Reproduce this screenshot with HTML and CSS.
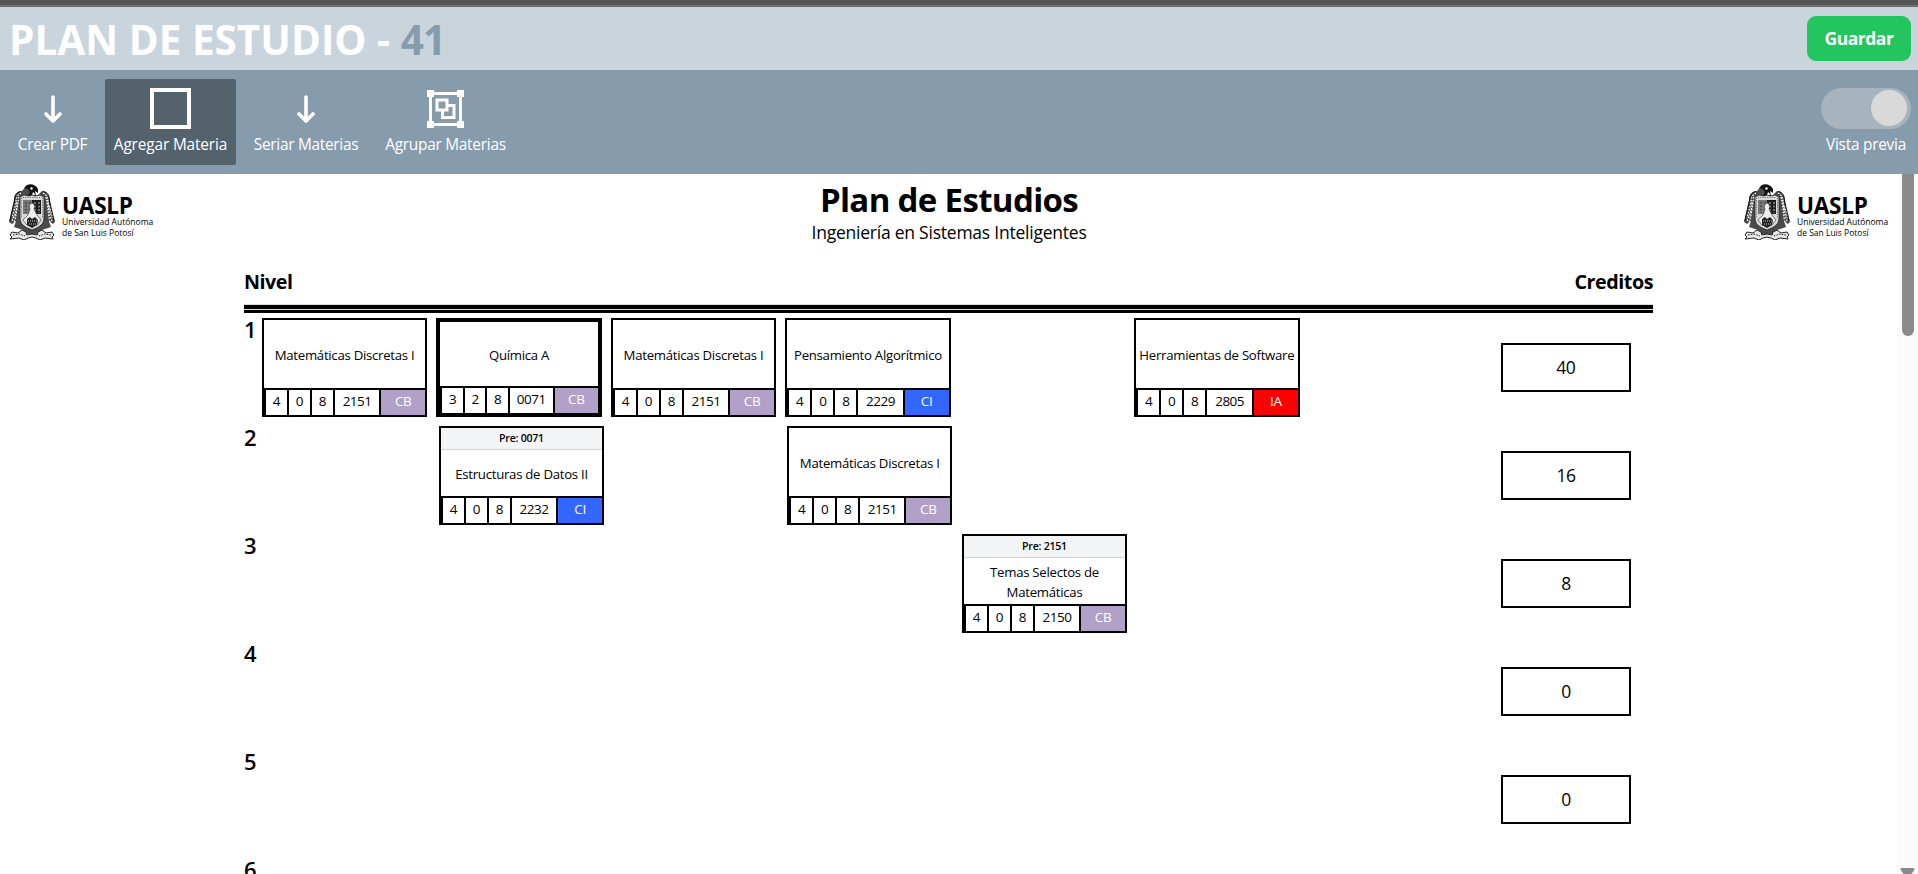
FILE: index.html
```html
<!DOCTYPE html>
<html lang="es">
<head>
<meta charset="utf-8">
<title>Plan de Estudio</title>
<link rel="stylesheet" href="styles.css">
</head>
<body>
<svg class="defs" width="0" height="0" aria-hidden="true">
  <symbol id="crest" viewBox="0 0 46 56">
    <path fill="#4a4a4a" d="M13 7C8 7 5 11 5 16L3 25 0 38l3 2 4-3-2 6 9 3 3 4h13l3-4 9-3-2-6 4 3 2-2-4-13-1-9C40 11 37 7 33 7l-5 5-3-1-2-9-5-1z"/>
    <path fill="#111" d="M15 4l3-3c4-2 9 0 11 4v4l-3-2 1 5h-8l2-4-2-3z"/>
    <path fill="#fff" d="M21 4l2-1 1 2-2 1zM24 8l2 2-1 2-2-1z"/>
    <path fill="none" stroke="#fff" stroke-width="1.3" stroke-dasharray="1.6 1.4" d="M12 9c-4 2-5 5-5 10L3 34M34 9c4 2 5 5 5 10l5 15M10 13c-2 8-2 16-5 26M37 13c2 8 2 16 4 26M8 18c0 8-2 13-5 19M39 18c1 8 2 13 4 19"/>
    <path fill="none" stroke="#111" stroke-width="1" d="M12 7.500C7 8 5.500 12 5.500 17L.8 37M34 7.500c5 .5 6.500 4.500 6.500 9.500l4.700 20"/>
    <path fill="#d8d8d8" stroke="#222" stroke-width=".8" d="M11 13l4-2 5 1 3-1 3 1 5-1 4 2v21c0 6-4 9-12 12-8-3-12-6-12-12z"/>
    <path fill="none" stroke="#666" stroke-width="1" stroke-dasharray="1 1.3" d="M12.500 14v20M33.500 14v20M14 13.500h18"/>
    <path fill="#777" d="M14 16h9v14h-9z"/>
    <path fill="#1c1c1c" d="M23 16h9v14h-9z"/>
    <path stroke="#ccc" stroke-width="1" stroke-dasharray="2 1.5" d="M26 18v11M30 18v11"/>
    <path stroke="#333" stroke-width="1.2" stroke-dasharray="1.5 2" d="M17 18v11M21 18v11"/>
    <path fill="#eee" stroke="#444" stroke-width=".7" d="M23 19c3 1 3 4 2 6l3 6 4 5-4 5H18l-4-5 5-5 2-6c-1-2-1-5 2-6z"/>
    <path fill="#222" d="M18 35l3-2 2 2 3-2 3 3-1 5-5 3-5-3z"/>
    <path stroke="#fff" stroke-width=".8" stroke-dasharray="1 1" d="M19 37h9M20 40h7"/>
    <path fill="#e8e8e8" stroke="#222" stroke-width="1" stroke-linejoin="round" d="M1 51l2-3 6 1 4-3 4 2 1 3 5-1 5 1 1-3 4-2 4 3 6-1 2 3-2 2 1 2-8-1-5 2-4-2-4-1-4 1-4 2-5-2-9 1 2-2z"/>
    <path fill="none" stroke="#222" stroke-width="1" stroke-dasharray="1.6 1.2" d="M4 51l7-1 4 2 3-2M42 51l-7-1-4 2-3-2"/>
  </symbol>
  <symbol id="arrow" viewBox="0 0 18 28">
    <path fill="none" stroke="#fff" stroke-width="3.6" stroke-linecap="round" stroke-linejoin="round" d="M9 2v23M2 19l7 7 7-7"/>
  </symbol>
</svg>

<div class="app">
  <div class="strip"></div>
  <header class="header">
    <h1 class="title">PLAN DE ESTUDIO - <span class="title-id">41</span></h1>
    <button class="save">Guardar</button>
  </header>

  <nav class="toolbar">
    <div class="tools">
      <div class="tool tool-pdf"><div class="tool-icon"><svg class="arrow"><use href="#arrow"/></svg></div><span>Crear PDF</span></div>
      <div class="tool tool-add tool-active"><div class="tool-icon"><div class="square"></div></div><span>Agregar Materia</span></div>
      <div class="tool tool-link"><div class="tool-icon"><svg class="arrow"><use href="#arrow"/></svg></div><span>Seriar Materias</span></div>
      <div class="tool tool-group"><div class="tool-icon">
        <svg width="37" height="38" viewBox="0 0 37 38">
          <path fill="none" stroke="#fff" stroke-width="3" d="M3.500 3.500h30v31h-30z"/>
          <path fill="#fff" d="M0 0h7v7H0zM30 0h7v7h-7zM0 31h7v7H0zM30 31h7v7h-7z"/>
          <path fill="none" stroke="#fff" stroke-width="3" d="M10 10h10v10H10z"/>
          <path fill="none" stroke="#fff" stroke-width="3" d="M20 15.500h7v12H15.500V20"/>
        </svg></div><span>Agrupar Materias</span></div>
    </div>
    <div class="preview">
      <div class="toggle"><div class="knob"></div></div>
      <span>Vista previa</span>
    </div>
  </nav>

  <main class="viewport">
    <div class="sheet">
      <div class="sheet-head">
        <div class="logo"><svg class="crest"><use href="#crest"/></svg><div class="logo-text"><b>UASLP</b><span>Universidad Autónoma</span><span>de San Luis Potosí</span></div></div>
        <div class="heading"><h2>Plan de Estudios</h2><p>Ingeniería en Sistemas Inteligentes</p></div>
        <div class="logo"><svg class="crest"><use href="#crest"/></svg><div class="logo-text"><b>UASLP</b><span>Universidad Autónoma</span><span>de San Luis Potosí</span></div></div>
      </div>

      <section class="plan">
        <div class="plan-head"><span>Nivel</span><span>Creditos</span></div>
        <div class="rule rule-top"></div>
        <div class="rule rule-bottom"></div>

        <div class="level level-first">
          <div class="num">1</div>
          <div class="slot"><div class="card"><div class="name">Matemáticas Discretas I</div><div class="cells"><i>4</i><i>0</i><i>8</i><i>2151</i><i class="cb">CB</i></div></div></div>
          <div class="slot"><div class="card card-thick"><div class="name">Química A</div><div class="cells"><i>3</i><i>2</i><i>8</i><i>0071</i><i class="cb">CB</i></div></div></div>
          <div class="slot"><div class="card"><div class="name">Matemáticas Discretas I</div><div class="cells"><i>4</i><i>0</i><i>8</i><i>2151</i><i class="cb">CB</i></div></div></div>
          <div class="slot"><div class="card"><div class="name">Pensamiento Algorítmico</div><div class="cells"><i>4</i><i>0</i><i>8</i><i>2229</i><i class="ci">CI</i></div></div></div>
          <div class="slot"></div>
          <div class="slot"><div class="card"><div class="name">Herramientas de Software</div><div class="cells cells-wide"><i>4</i><i>0</i><i>8</i><i>2805</i><i class="ia">IA</i></div></div></div>
          <div class="slot"></div>
          <div class="slot credit"><div class="box">40</div></div>
        </div>

        <div class="level">
          <div class="num">2</div>
          <div class="slot"></div>
          <div class="slot"><div class="card"><div class="pre">Pre: 0071</div><div class="name">Estructuras de Datos II</div><div class="cells"><i>4</i><i>0</i><i>8</i><i>2232</i><i class="ci">CI</i></div></div></div>
          <div class="slot"></div>
          <div class="slot"><div class="card"><div class="name">Matemáticas Discretas I</div><div class="cells"><i>4</i><i>0</i><i>8</i><i>2151</i><i class="cb">CB</i></div></div></div>
          <div class="slot"></div><div class="slot"></div><div class="slot"></div>
          <div class="slot credit"><div class="box">16</div></div>
        </div>

        <div class="level level-third">
          <div class="num">3</div>
          <div class="slot"></div><div class="slot"></div><div class="slot"></div><div class="slot"></div>
          <div class="slot"><div class="card"><div class="pre">Pre: 2151</div><div class="name">Temas Selectos de Matemáticas</div><div class="cells"><i>4</i><i>0</i><i>8</i><i>2150</i><i class="cb">CB</i></div></div></div>
          <div class="slot"></div><div class="slot"></div>
          <div class="slot credit"><div class="box">8</div></div>
        </div>

        <div class="level">
          <div class="num">4</div>
          <div class="slot"></div><div class="slot"></div><div class="slot"></div><div class="slot"></div><div class="slot"></div><div class="slot"></div><div class="slot"></div>
          <div class="slot credit"><div class="box">0</div></div>
        </div>

        <div class="level">
          <div class="num">5</div>
          <div class="slot"></div><div class="slot"></div><div class="slot"></div><div class="slot"></div><div class="slot"></div><div class="slot"></div><div class="slot"></div>
          <div class="slot credit"><div class="box">0</div></div>
        </div>

        <div class="level">
          <div class="num">6</div>
        </div>
      </section>
    </div>
    <div class="scrollbar">
      <div class="thumb"></div>
      <svg width="15" height="6" viewBox="0 0 15 6"><path fill="#8b8b8b" d="M2 0h11c1.500 0 2 1 1.300 2L11.500 6h-8L.7 2C0 1 .5 0 2 0z"/></svg>
    </div>
  </main>
</div>
</body>
</html>
```

FILE: styles.css
```css
* { box-sizing: border-box; margin: 0; padding: 0; }

body {
  font-family: "Open Sans", "Noto Sans", sans-serif;
  font-size: 18px;
  color: #000;
  background: #fff;
  overflow: hidden;
}

.defs { position: absolute; }

.app { display: flex; flex-direction: column; height: 874px; overflow: hidden; }

.strip { flex: none; height: 7px; background: #565656; border-bottom: 2px solid #757070; }

.header {
  flex: none;
  height: 63px;
  padding: 0 7px 0 9px;
  display: flex;
  align-items: center;
  justify-content: space-between;
  background: #cad4dd;
}
.title { color: #fff; font-size: 40.500px; line-height: 58px; padding-top: 3px; font-weight: 700; white-space: pre; }
.title-id { color: #869bab; letter-spacing: -.8px; }
.save {
  width: 104px;
  height: 45px;
  padding-bottom: 2px;
  border: 0;
  border-radius: 9px;
  background: #23c55e;
  color: #fff;
  font: 700 17.500px "Open Sans", sans-serif;
  letter-spacing: -.5px;
}

.toolbar {
  flex: none;
  height: 104px;
  padding: 9px 7px 9px 9px;
  display: flex;
  justify-content: space-between;
  background: #869bab;
  color: #fff;
  font-size: 15.400px;
  line-height: 23px;
  letter-spacing: -.25px;
  white-space: nowrap;
}
.tools { display: flex; gap: 9px; }
.tool { height: 86px; padding: 9px 0; display: flex; flex-direction: column; align-items: center; gap: 4px; border-radius: 2px; }
.tool-pdf { width: 87px; }
.tool-add { width: 131px; letter-spacing: -.14px; }
.tool-link { width: 122px; letter-spacing: -.28px; }
.tool-group { width: 139px; }
.tool-active { background: #54626c; }
.tool-icon { height: 41px; display: flex; align-items: center; justify-content: center; }
.arrow { width: 18px; height: 28px; }
.square { width: 41px; height: 41px; border: 4px solid #fff; }
.preview { display: flex; flex-direction: column; align-items: center; gap: 4px; padding-top: 9px; }
.toggle { width: 90px; height: 41px; padding: 2px 4px; border-radius: 21px; background: #a7b3bd; display: flex; justify-content: flex-end; }
.knob { width: 36px; height: 36px; border-radius: 50%; background: #d9d9d9; }

.viewport { flex: 1; min-height: 0; display: flex; overflow: hidden; }
.sheet { width: 1897px; height: 700px; overflow: hidden; }
.sheet-head { height: 87px; padding: 10px 7px 0 9px; display: flex; justify-content: space-between; align-items: flex-start; }
.logo { width: 146px; display: flex; gap: 7px; }
.crest { width: 46px; height: 56px; flex: none; }
.logo-text { display: flex; flex-direction: column; font-size: 8.500px; line-height: 10.500px; white-space: nowrap; }
.logo-text b { font-size: 22.500px; line-height: 22px; margin-top: 11px; letter-spacing: -.2px; }
.heading { text-align: center; margin-left: -1px; }
.heading h2 { font-size: 33px; line-height: 32px; letter-spacing: -.65px; }
.heading p { font-size: 17.500px; line-height: 25px; letter-spacing: -.23px; padding-top: 4px; }

.plan { width: 1409px; margin-left: 244px; }
.plan-head { height: 43px; padding-top: 7px; display: flex; justify-content: space-between; font-size: 19.700px; line-height: 27px; font-weight: 700; letter-spacing: -.45px; }
.rule { background: #000; border-top: 1px solid #ddd; }
.rule-top { height: 5px; }
.rule-bottom { height: 4px; }

.level { display: grid; grid-template-columns: 16.200px repeat(8, minmax(0, 1fr)); height: 108px; }
.level-first { grid-template-columns: 13.300px repeat(8, minmax(0, 1fr)); margin-top: 1px; }
.level-third { grid-template-columns: 17.500px repeat(8, minmax(0, 1fr)); }
.num { font-size: 22px; line-height: 30px; font-weight: 600; letter-spacing: -.4px; }
.slot { padding: 4px 4.500px 5px; }

.card { width: 165.500px; height: 99px; border: 2px solid #000; display: flex; flex-direction: column; background: #fff; }
.card-thick { border-width: 4px; }
.name {
  flex: 1;
  padding-top: 1px;
  display: flex;
  align-items: center;
  justify-content: center;
  text-align: center;
  font-size: 13.200px;
  line-height: 20px;
  letter-spacing: -.27px;
}
.pre { flex: none; height: 22px; border-bottom: 1px solid #d1d5db; background: #f3f4f6; font-size: 10.600px; line-height: 20px; font-weight: 600; letter-spacing: -.25px; text-align: center; }
.cells { flex: none; height: 27px; display: grid; grid-template-columns: 1fr 1fr 1fr 2fr 2fr; border-top: 2px solid #000; }
.cells-wide { grid-template-columns: 23px 23px 23px 47px 1fr; }
.cells i { border-left: 2px solid #000; font-style: normal; font-size: 13.500px; line-height: 22px; letter-spacing: -.5px; text-align: center; }
.cells .cb, .cells .ci, .cells .ia { color: #fff; letter-spacing: -.3px; }
.cb { background: #b1a0c7; }
.ci { background: #3366ff; }
.ia { background: #ff0000; }

.credit { display: flex; align-items: center; justify-content: center; }
.box { width: 130.500px; height: 49px; border: 2px solid #000; text-align: center; font-size: 17.500px; line-height: 45px; letter-spacing: -.5px; }

.scrollbar { width: 21px; background: #fbfbfb; display: flex; flex-direction: column; align-items: center; justify-content: space-between; }
.thumb { width: 12px; height: 162px; margin-right: -1px; border-radius: 0 0 6px 6px; background: #8b8b8b; }
```
